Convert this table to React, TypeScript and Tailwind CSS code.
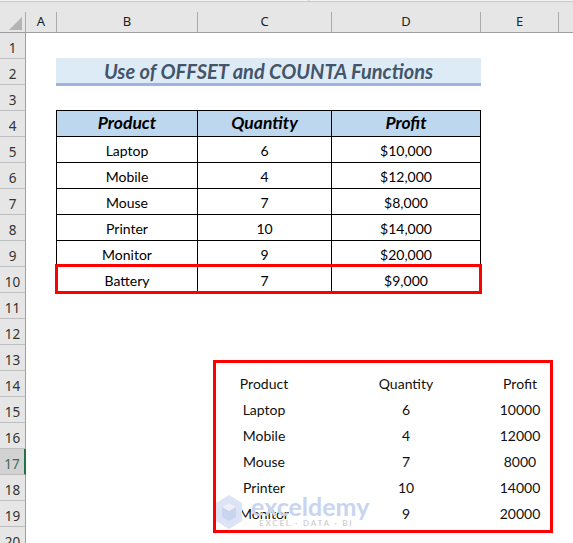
import React from "react";

const colLetters: { label: string; w: string }[] = [
  { label: "A", w: "w-[31px]" },
  { label: "B", w: "w-[141px]" },
  { label: "C", w: "w-[134px]" },
  { label: "D", w: "w-[149px]" },
  { label: "E", w: "w-[78px]" },
];

const mainRows = [
  ["Laptop", "6", "$10,000"],
  ["Mobile", "4", "$12,000"],
  ["Mouse", "7", "$8,000"],
  ["Printer", "10", "$14,000"],
  ["Monitor", "9", "$20,000"],
  ["Battery", "7", "$9,000"],
];

const lowerRows = [
  ["Product", "Quantity", "Profit"],
  ["Laptop", "6", "10000"],
  ["Mobile", "4", "12000"],
  ["Mouse", "7", "8000"],
  ["Printer", "10", "14000"],
  ["Monitor", "9", "20000"],
];

function ColumnHeader() {
  return (
    <div className="relative h-[33px] bg-[#E6E6E6] border-b border-[#9E9E9E] flex flex-col">
      <div className="h-px flex">
        <div className="w-[307px] bg-[#F4F4F4]" />
        <div className="w-[3px] bg-[#E0E0E0]" />
        <div className="flex-1 bg-[#F4F4F4]" />
      </div>
      <div className="h-px bg-[#C9C9C9]" />
      <div className="flex-1 flex items-end">
        <div className="w-[26px] h-[20px] border-r border-[#ABABAB] flex items-end justify-end pr-[3px] pb-[2px]">
          <svg width="13" height="13" viewBox="0 0 13 13">
            <polygon points="13,0 13,13 0,13" fill="#B4B4B4" />
          </svg>
        </div>
        {colLetters.map((c) => (
          <div
            key={c.label}
            className={`${c.w} h-[20px] border-r border-[#ABABAB] flex items-center justify-center text-[13px] text-[#222] [font-family:'Noto_Sans',sans-serif]`}
          >
            {c.label}
          </div>
        ))}
        <div className="flex-1 h-[20px]" />
      </div>
    </div>
  );
}

function RowHeaders() {
  const rows = Array.from({ length: 20 }, (_, i) => i + 1);
  return (
    <div className="w-[26px] flex flex-col shrink-0">
      {rows.map((n) =>
        n === 17 ? (
          <div
            key={n}
            className="h-[26px] shrink-0 bg-[#D2D2D2] border-b border-[#BEBEBE] border-r-2 border-r-[#217346] flex items-center justify-center pt-[5px] text-[13.5px] text-[#3E6B57] [font-family:'Noto_Sans',sans-serif]"
          >
            {n}
          </div>
        ) : (
          <div
            key={n}
            className="h-[26px] shrink-0 bg-[#E6E6E6] border-b border-[#BEBEBE] border-r border-r-[#9E9E9E] flex items-center justify-center pt-[5px] text-[13.5px] text-[#333] [font-family:'Noto_Sans',sans-serif]"
          >
            {n}
          </div>
        )
      )}
    </div>
  );
}

function Watermark() {
  return (
    <div className="absolute left-[189px] top-[461px] flex items-center gap-[8px] pointer-events-none">
      <svg width="28" height="36" viewBox="0 0 28 36">
        <polygon points="14,1 27,9 27,27 14,35 1,27 1,9" fill="#DCE3F4" />
        <polygon points="14,9 21,13 21,23 14,27 7,23 7,13" fill="#C9D4EE" />
        <polygon points="14,9 21,13 14,17 7,13" fill="#EEF1F9" />
      </svg>
      <div className="flex flex-col items-start -mt-[2px]">
        <div className="text-[25px] leading-[25px] font-bold text-[#C8D4F0] [font-family:Lato,sans-serif]">
          exceldemy
        </div>
        <div className="text-[8px] leading-[9px] font-bold text-[#D2D2D2] tracking-[1.8px] pl-[8px] [font-family:Lato,sans-serif]">
          EXCEL · DATA · BI
        </div>
      </div>
    </div>
  );
}

function Sheet() {
  return (
    <div className="flex-1 relative flex flex-col items-start [font-family:Lato,sans-serif] text-black">
      {/* Title */}
      <div className="mt-[25px] ml-[30px] w-[425px] h-[28px] bg-[#DDEBF7] border-b-[3px] border-[#9FB3DC] flex items-center justify-center">
        <span className="text-[20px] font-bold italic text-[#44546A] leading-none">
          Use of OFFSET and COUNTA Functions
        </span>
      </div>

      {/* Main table */}
      <div className="relative mt-[24px] ml-[30px] w-[425px] border-l border-t border-black">
        <div className="flex h-[26px] bg-[#BDD7EE]">
          <div className="w-[141px] border-r border-b border-black flex items-center justify-center text-[17.5px] font-bold italic">
            Product
          </div>
          <div className="w-[134px] border-r border-b border-black flex items-center justify-center text-[17.5px] font-bold italic">
            Quantity
          </div>
          <div className="w-[149px] border-r border-b border-black flex items-center justify-center text-[17.5px] font-bold italic">
            Profit
          </div>
        </div>
        {mainRows.map((r) => (
          <div key={r[0]} className="flex h-[26px] text-[14px]">
            <div className="w-[141px] border-r border-b border-black flex items-center justify-center pt-[1px]">
              {r[0]}
            </div>
            <div className="w-[134px] border-r border-b border-black flex items-center justify-center pt-[1px]">
              {r[1]}
            </div>
            <div className="w-[149px] border-r border-b border-black flex items-center justify-center pt-[1px]">
              {r[2]}
            </div>
          </div>
        ))}
        <div className="absolute left-[-2px] top-[153px] w-[427px] h-[30px] border-[3px] border-[#FF0000] pointer-events-none" />
      </div>

      {/* Lower result box */}
      <div className="mt-[67px] ml-[187px] w-[340px] h-[173px] border-[3px] border-[#FF0000] pt-[7px]">
        <div className="grid grid-cols-[96px_188px_40px] auto-rows-[26px] justify-items-center items-center text-[14px] text-[#111]">
          {lowerRows.map((r) => (
            <React.Fragment key={r[0]}>
              <div className="whitespace-nowrap pt-[1px]">{r[0]}</div>
              <div className="whitespace-nowrap pt-[1px]">{r[1]}</div>
              <div className="whitespace-nowrap pt-[1px]">{r[2]}</div>
            </React.Fragment>
          ))}
        </div>
      </div>

      <Watermark />
    </div>
  );
}

export default function App() {
  return (
    <div className="w-[573px] h-[543px] overflow-hidden bg-white">
      <ColumnHeader />
      <div className="flex">
        <RowHeaders />
        <Sheet />
      </div>
    </div>
  );
}
